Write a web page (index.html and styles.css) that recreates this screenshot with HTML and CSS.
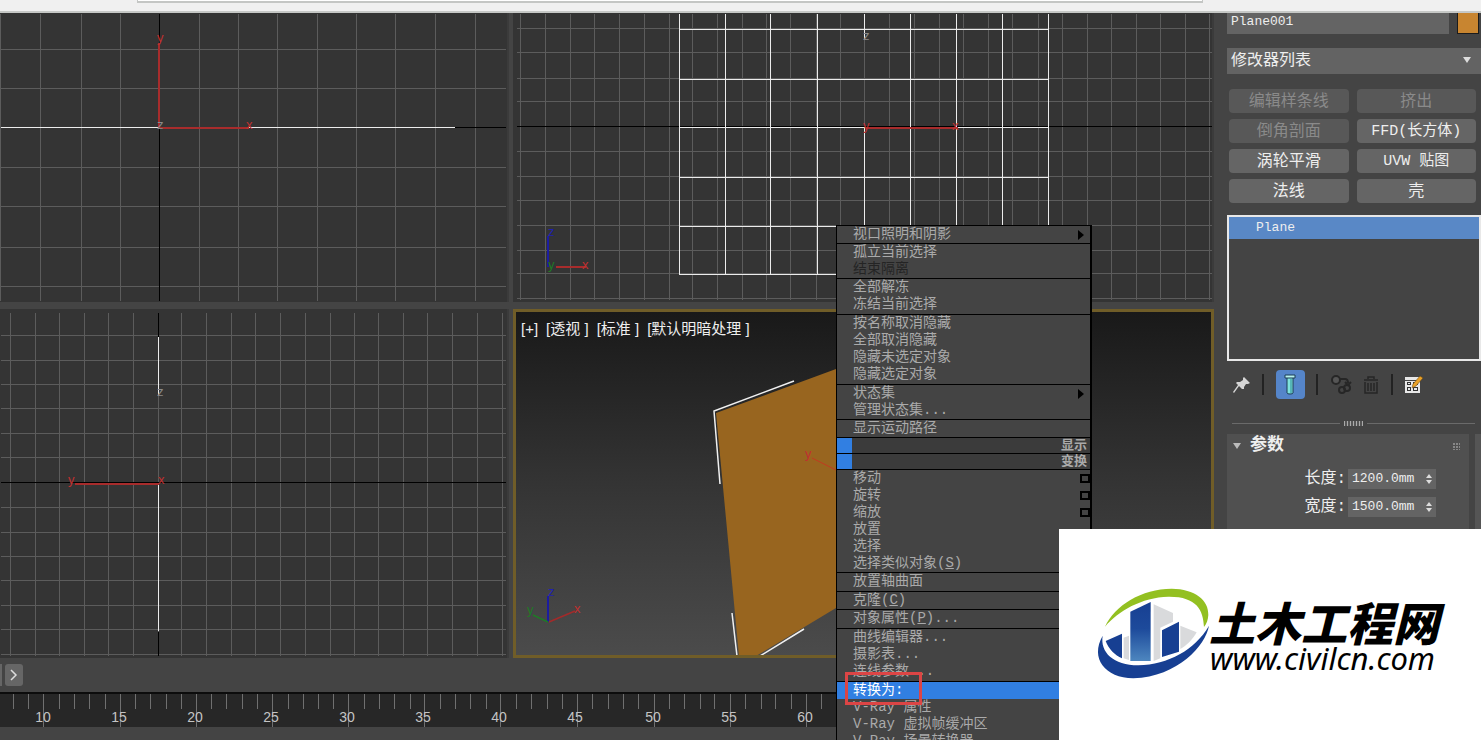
FILE: index.html
```html
<!DOCTYPE html>
<html lang="zh-CN">
<head>
    <meta charset="UTF-8">
    <meta name="viewport" content="width=device-width, initial-scale=1.0">
    <title>Plane001</title>
    <link rel="stylesheet" href="styles.css">
</head>
<body>

    <div class="topbar"><div class="topbar-field"></div></div>

    <div class="app">
        <main class="workspace">
            <div class="viewports">
                <!-- Top view -->
                <section class="viewport">
                    <svg viewBox="0 13 509 289" preserveAspectRatio="xMinYMin slice">
                        <g transform="translate(.5 .5)">
                            <path class="grid" d="M0 13V300M40 13V300M81 13V300M120 13V300M199 13V300M238 13V300M277 13V300M317 13V300M356 13V300M395 13V300M435 13V300M475 13V300M0 49H505M0 88H505M0 167H505M0 206H505M0 247H505M0 286H505"/>
                            <path class="origin" d="M159 13V300M454 127H505"/>
                            <path class="mesh" d="M0 127H158M246 127H454"/>
                            <path class="red" d="M158 42V127M158 127H248"/>
                        </g>
                        <text class="axis red-text" x="157" y="42">y</text>
                        <text class="axis red-text" x="246" y="129">x</text>
                        <text class="axis grey-text" x="157" y="129">z</text>
                    </svg>
                </section>

                <!-- Front view -->
                <section class="viewport">
                    <svg viewBox="513 13 701 289" preserveAspectRatio="xMinYMin slice">
                        <g transform="translate(.5 .5)">
                            <path class="grid" d="M520 13V299M545 13V299M570 13V299M594 13V299M619 13V299M644 13V299M669 13V299M692 13V299M717 13V299M742 13V299M766 13V299M790 13V299M816 13V299M840 13V299M864 13V299M889 13V299M914 13V299M939 13V299M963 13V299M988 13V299M1012 13V299M1038 13V299M1062 13V299M1087 13V299M1111 13V299M1136 13V299M1160 13V299M1185 13V299M1209 13V299M516 28H1211M516 52H1211M516 78H1211M516 101H1211M516 151H1211M516 176H1211M516 200H1211M516 225H1211M516 250H1211M516 273H1211M516 298H1211"/>
                            <path class="origin" d="M516 126H1211"/>
                            <path class="mesh" d="M679 13V274M725 13V274M770 13V274M817 13V274M864 13V38M864 127V274M910 13V274M956 13V274M1002 13V274M1048 13V274M679 29H1048M679 79H1048M679 127H864M956 127H1048M679 177H1048M679 226H1048M679 274H1048"/>
                            <path class="red" d="M865 127H957"/>
                            <path class="blue" d="M547 235V266"/>
                            <path class="red" d="M555 266H585"/>
                        </g>
                        <text class="axis grey-text" x="863" y="40">z</text>
                        <text class="axis red-text" x="863" y="130">y</text>
                        <text class="axis red-text" x="952" y="130">x</text>
                        <text class="axis blue-text" x="548" y="236">z</text>
                        <text class="axis green-text" x="548" y="269">y</text>
                        <text class="axis red-text" x="582" y="269">x</text>
                    </svg>
                </section>

                <!-- Left view -->
                <section class="viewport">
                    <svg viewBox="0 309 509 349" preserveAspectRatio="xMinYMin slice">
                        <g transform="translate(.5 .5)">
                            <path class="grid" d="M10 312V655M35 312V655M59 312V655M84 312V655M108 312V655M133 312V655M158 312V655M181 312V655M206 312V655M231 312V655M255 312V655M280 312V655M305 312V655M330 312V655M354 312V655M378 312V655M403 312V655M427 312V655M452 312V655M477 312V655M502 312V655M0 335H505M0 360H505M0 384H505M0 408H505M0 433H505M0 457H505M0 507H505M0 532H505M0 556H505M0 580H505M0 605H505M0 629H505M0 654H505"/>
                            <path class="origin" d="M158 312V336M158 631V655M0 482H505"/>
                            <path class="mesh" d="M158 336V394M158 484V630"/>
                            <path class="red" d="M74 483H158"/>
                        </g>
                        <text class="axis grey-text" x="157" y="396">z</text>
                        <text class="axis red-text" x="68" y="484">y</text>
                        <text class="axis red-text" x="158" y="484">x</text>
                    </svg>
                </section>

                <!-- Perspective view -->
                <section class="viewport active">
                    <svg viewBox="516 312 695 343" preserveAspectRatio="xMinYMin slice">
                        <path fill="#98651f" d="M716 413 836 369 880 353V582L836 608 756 656H739Z"/>
                        <path class="edge" d="M794 381 714 411 720 484M732 613 737 656M760 656 804 629"/>
                        <path class="axis-line" stroke="#c23a20" d="M812 458 838 471"/>
                        <path class="axis-line" stroke="#1c1ca0" stroke-width="2" d="M548 596V622"/>
                        <path class="axis-line" stroke="#1f7a26" stroke-width="1.5" d="M533 615 548 622"/>
                        <path class="axis-line" stroke="#a32a2a" stroke-width="1.5" d="M549 622 575 611"/>
                        <text class="axis red-text" x="805" y="458">y</text>
                        <text class="axis blue-text" x="548" y="596">z</text>
                        <text class="axis green-text" x="527" y="614">y</text>
                        <text class="axis red-text" x="574" y="613">x</text>
                    </svg>
                    <div class="viewport-label">
                        <span>[+]</span><span>[透视 ]</span><span>[标准 ]</span><span>[默认明暗处理 ]</span>
                    </div>
                </section>
            </div>

            <!-- Time slider and track bar -->
            <div class="slider-row">
                <span class="slider-end"></span>
                <button class="slider-next" aria-label="下一帧">
                    <svg width="8" height="12" viewBox="0 0 8 12"><path fill="none" stroke="#ddd" stroke-width="1.5" d="M1 1 6 6 1 11"/></svg>
                </button>
            </div>
            <div class="trackbar">
                <svg viewBox="0 692 1216 35" preserveAspectRatio="xMinYMin slice">
                    <path class="tick" transform="translate(.5 0)" d="M13 694V709M28 694V709M43 694V727M59 694V709M74 694V709M89 694V709M105 694V709M120 694V727M135 694V709M150 694V709M166 694V709M181 694V709M196 694V727M211 694V709M226 694V709M242 694V709M257 694V709M272 694V727M288 694V709M303 694V709M318 694V709M333 694V709M348 694V727M364 694V709M379 694V709M394 694V709M410 694V709M424 694V727M440 694V709M455 694V709M470 694V709M486 694V709M500 694V727M516 694V709M531 694V709M547 694V709M562 694V709M577 694V727M592 694V709M608 694V709M623 694V709M638 694V709M654 694V727M669 694V709M684 694V709M700 694V709M714 694V709M730 694V727M745 694V709M761 694V709M775 694V709M791 694V709M806 694V727M821 694V709"/>
                    <g class="tick-labels">
                        <text x="43" y="722">10</text>
                        <text x="119" y="722">15</text>
                        <text x="195" y="722">20</text>
                        <text x="271" y="722">25</text>
                        <text x="347" y="722">30</text>
                        <text x="423" y="722">35</text>
                        <text x="499" y="722">40</text>
                        <text x="575" y="722">45</text>
                        <text x="653" y="722">50</text>
                        <text x="729" y="722">55</text>
                        <text x="805" y="722">60</text>
                    </g>
                </svg>
            </div>
            <div class="statusbar"></div>
        </main>

        <!-- Modify panel -->
        <aside class="panel">
            <div class="name-row">
                <input class="name-input" type="text" value="Plane001" aria-label="名称">
                <button class="swatch" aria-label="颜色"></button>
            </div>

            <div class="modifier-select">
                <select aria-label="修改器列表">
                    <option>修改器列表</option>
                </select>
            </div>

            <div class="modifier-buttons">
                <button disabled>编辑样条线</button>
                <button disabled>挤出</button>
                <button disabled>倒角剖面</button>
                <button class="mixed">FFD(长方体)</button>
                <button>涡轮平滑</button>
                <button class="mixed">UVW 贴图</button>
                <button>法线</button>
                <button>壳</button>
            </div>

            <ul class="stack">
                <li class="selected">Plane</li>
            </ul>

            <div class="stack-tools">
                <button class="tool" aria-label="锁定堆栈">
                    <svg width="18" height="18" viewBox="0 0 18 18"><path fill="#d5d5d5" d="M11 1 17 7 15 8 13 8 11 11 11 13 9 13 6 10 1 17 0 16 5 9 3 7 4 6 7 6 10 4 10 2Z"/></svg>
                </button>
                <span class="tool-sep"></span>
                <button class="tool on" aria-label="显示最终结果">
                    <svg width="14" height="22" viewBox="0 0 14 22"><path fill="#7fe3dc" stroke="#1d3d55" d="M4 3H10V19Q10 20 7 20 4 20 4 19Z"/><path fill="#b8f2ee" stroke="#1d3d55" d="M2 1H12V4H2Z"/><path stroke="#2f8b93" d="M8 5V19"/></svg>
                </button>
                <span class="tool-sep"></span>
                <button class="tool" aria-label="使唯一">
                    <svg width="22" height="22" viewBox="0 0 22 22"><g fill="none" stroke="#262626" stroke-width="2"><circle cx="6" cy="6" r="4" fill="#555"/><circle cx="12" cy="16" r="3"/><circle cx="17" cy="14" r="3"/><path d="M10 5H15Q18 5 18 9M15 8 18 11 21 8"/></g></svg>
                </button>
                <button class="tool" aria-label="移除修改器">
                    <svg width="16" height="20" viewBox="0 0 16 20"><g fill="none" stroke="#262626" stroke-width="1.5"><path d="M1 5H15M5 4V2H11V4M2 7V18H14V7M5 8V16M8 8V16M11 8V16"/></g></svg>
                </button>
                <span class="tool-sep"></span>
                <button class="tool" aria-label="配置修改器集">
                    <svg width="20" height="20" viewBox="0 0 20 20"><path fill="#e8e8e8" d="M1 2H15V5H1ZM1 6H16V18H1Z"/><path fill="#333" d="M3 7H7V10H3ZM9 7H14V10H9ZM3 12H7V16H3ZM9 12H14V16H9Z"/><path fill="#e8e8e8" d="M4 8H6V9H4ZM4 13H6V15H4ZM10 13H13V15H10Z"/><path fill="#e9a127" stroke="#5a3f14" stroke-width=".5" d="M16 1 19 3 12 11 8 13 9 9Z"/></svg>
                </button>
            </div>

            <div class="divider"><span class="divider-grip"></span></div>

            <div class="rollouts">
                <section class="rollout">
                    <h2 class="rollout-head"><span class="caret"></span>参数<span class="dots"></span></h2>
                    <div class="param">
                        <label for="length">长度:</label>
                        <div class="spinner"><input id="length" type="text" value="1200.0mm"><span class="arrows"></span></div>
                    </div>
                    <div class="param">
                        <label for="width">宽度:</label>
                        <div class="spinner"><input id="width" type="text" value="1500.0mm"><span class="arrows"></span></div>
                    </div>
                </section>
                <div class="scrollbar"></div>
            </div>
        </aside>
    </div>

    <!-- Quad menu -->
    <nav class="menu">
        <div class="menu-group">
            <button class="submenu">视口照明和阴影</button>
        </div>
        <div class="menu-group">
            <button>孤立当前选择</button>
            <button disabled>结束隔离</button>
        </div>
        <div class="menu-group roomy">
            <button>全部解冻</button>
            <button>冻结当前选择</button>
        </div>
        <div class="menu-group roomy">
            <button>按名称取消隐藏</button>
            <button>全部取消隐藏</button>
            <button>隐藏未选定对象</button>
            <button>隐藏选定对象</button>
        </div>
        <div class="menu-group">
            <button class="submenu">状态集</button>
            <button>管理状态集...</button>
        </div>
        <div class="menu-group">
            <button>显示运动路径</button>
        </div>
        <h3 class="menu-title">显示</h3>
        <h3 class="menu-title">变换</h3>
        <div class="menu-group">
            <button class="boxed">移动</button>
            <button class="boxed">旋转</button>
            <button class="boxed">缩放</button>
            <button>放置</button>
            <button>选择</button>
            <button>选择类似对象(<u>S</u>)</button>
        </div>
        <div class="menu-group roomy">
            <button>放置轴曲面</button>
        </div>
        <div class="menu-group">
            <button>克隆(<u>C</u>)</button>
        </div>
        <div class="menu-group roomy">
            <button>对象属性(<u>P</u>)...</button>
        </div>
        <div class="menu-group roomy">
            <button>曲线编辑器...</button>
            <button>摄影表...</button>
            <button>连线参数...</button>
        </div>
        <div class="menu-group">
            <button class="current">转换为:</button>
            <button>V-Ray 属性</button>
            <button>V-Ray 虚拟帧缓冲区</button>
            <button>V-Ray 场景转换器</button>
        </div>
        <div class="marker"></div>
    </nav>

    <!-- Site logo -->
    <div class="logo">
        <svg viewBox="0 0 422 211">
            <defs>
                <linearGradient id="tower" x1="0" y1="0" x2="0" y2="1">
                    <stop offset="0" stop-color="#173f92"/>
                    <stop offset=".45" stop-color="#1d4a9b"/>
                    <stop offset="1" stop-color="#4d86bf"/>
                </linearGradient>
            </defs>
            <g transform="translate(-4 -4) scale(.3333)">
                <path fill="#93c021" d="M150 305C180 240 260 192 350 191 420 192 462 225 460 270 459 285 455 297 447 306 445 255 425 214 340 215 260 217 190 258 150 305Z"/>
                <path fill="#d9dadc" d="M296 238 354 264V290L316 308V400L296 408ZM376 302 425 322C415 342 392 365 376 372ZM206 338 222 332V405L206 400Z"/>
                <path fill="#173f92" d="M152 348 201 326V400C180 392 160 370 152 348ZM321 316 372 290V380L321 396Z"/>
                <path fill="url(#tower)" d="M226 260 287 231V408H226Z"/>
                <path fill="#173f92" d="M462 302C452 360 370 455 235 460 150 458 104 400 143 332 135 382 175 420 250 421 340 418 420 375 462 302Z"/>
            </g>
            <text class="logo-name" x="150" y="112">土木工程网</text>
            <text class="logo-url" x="151" y="141">www.civilcn.com</text>
        </svg>
    </div>

</body>
</html>
```

FILE: styles.css
```css
* {
    box-sizing: border-box;
}
body {
    margin: 0;
    height: 100vh;
    overflow: hidden;
    position: relative;
    display: flex;
    flex-direction: column;
    background-color: #444;
    color: #eee;
    font-family: "Liberation Mono", "Noto Sans CJK SC", monospace;
    font-size: 13px;
}
button, input, select {
    font: inherit;
    color: inherit;
    border: none;
    padding: 0;
    margin: 0;
    background: none;
}
svg {
    display: block;
}

/* Strip above the program window */
.topbar {
    height: 13px;
    flex: none;
    padding: 0 278px 0 137px;
    background-color: #f0f0f0;
    border-bottom: 2px solid #c6c8c6;
}
.topbar-field {
    height: 3px;
    background-color: #fff;
    border: 1px solid #c4c6c4;
    border-width: 0 1px 2px;
}

.app {
    flex: 1;
    min-height: 0;
    display: flex;
}
.workspace {
    flex: 1;
    min-width: 0;
    display: flex;
    flex-direction: column;
}

/* Viewports */
.viewports {
    flex: 1;
    min-height: 0;
    display: grid;
    grid-template-columns: 509fr 701fr;
    grid-template-rows: 289fr 349fr;
    gap: 7px 4px;
    padding-right: 2px;
}
.viewport {
    position: relative;
    min-width: 0;
    min-height: 0;
    overflow: hidden;
    background-color: #343434;
    border-right: 2px solid #3b3b3b;
}
.viewport svg {
    width: 100%;
    height: 100%;
}
.viewport:not(.active) svg {
    width: calc(100% + 2px);
}
.viewport.active {
    border: 3px solid #705d28;
    background: linear-gradient(#191919, #343434 50%, #4b4b4b);
}
.viewport-label {
    position: absolute;
    top: 7px;
    left: 5px;
    display: flex;
    gap: 8px;
    font-family: "Liberation Sans", "Noto Sans CJK SC", sans-serif;
    font-size: 15px;
    line-height: 20px;
}
.grid, .origin, .mesh, .red, .blue, .tick {
    fill: none;
    shape-rendering: crispEdges;
}
.grid { stroke: #5c5c5c; }
.origin { stroke: #000; }
.mesh { stroke: #ececec; }
.red { stroke: #a82c2c; stroke-width: 2; }
.blue { stroke: #1c1ca0; stroke-width: 2; }
.edge { fill: none; stroke: #f0f0f0; stroke-width: 1.5; }
.axis-line { fill: none; }
.axis {
    font-family: "Liberation Sans", sans-serif;
    font-size: 13px;
}
.red-text { fill: #c03030; }
.grey-text { fill: #8a8a8a; }
.blue-text { fill: #2222b0; }
.green-text { fill: #1f7a26; }

/* Time controls */
.slider-row {
    height: 34px;
    flex: none;
    display: flex;
    align-items: center;
    gap: 3px;
}
.slider-end {
    width: 2px;
    height: 22px;
    background-color: #666;
}
.slider-next {
    width: 18px;
    height: 22px;
    display: flex;
    align-items: center;
    justify-content: center;
    border-radius: 3px;
    background-color: #666;
}
.trackbar {
    height: 35px;
    flex: none;
    overflow: hidden;
    background-color: #272727;
    border-top: 2px solid #0c0c0c;
}
.trackbar svg {
    width: 100%;
    height: 35px;
    margin-top: -2px;
}
.tick { stroke: #707070; }
.tick-labels {
    fill: #c4c4c4;
    font-family: "Liberation Sans", sans-serif;
    font-size: 14px;
    text-anchor: middle;
}
.statusbar {
    height: 13px;
    flex: none;
}

/* Modify panel */
.panel {
    width: 265px;
    flex: none;
    display: flex;
    flex-direction: column;
    padding-left: 11px;
}
.name-row {
    height: 21px;
    flex: none;
    display: flex;
    gap: 8px;
    padding-right: 2px;
}
.name-input {
    flex: 1;
    min-width: 0;
    padding: 0 4px 4px;
    background-color: #646464;
}
.swatch {
    width: 22px;
    background-color: #c88530;
    border: 1px solid #1c1c1c;
    border-top: none;
}
.modifier-select {
    position: relative;
    margin-top: 14px;
}
.modifier-select select {
    width: 100%;
    height: 26px;
    padding-left: 4px;
    appearance: none;
    background-color: #636363;
    font-size: 16px;
    display: block;
}
.modifier-select::after {
    content: "";
    position: absolute;
    right: 10px;
    top: 9px;
    border: 4px solid transparent;
    border-top: 6px solid #ddd;
    border-bottom: none;
}
.modifier-buttons {
    display: grid;
    grid-template-columns: 1fr 1fr;
    gap: 6px 8px;
    margin: 15px 5px 0 2px;
}
.modifier-buttons button {
    height: 24px;
    padding-top: 2px;
    border-radius: 4px;
    background-color: #656565;
    font-size: 16px;
    line-height: 22px;
    white-space: nowrap;
}
.modifier-buttons .mixed {
    font-size: 15px;
}
.modifier-buttons button:disabled {
    background-color: #585858;
    color: #8a8a8a;
}
.stack {
    list-style: none;
    height: 146px;
    flex: none;
    margin: 12px 0 0;
    padding: 0;
    border: 2px solid #e8e8e8;
}
.stack .selected {
    height: 22px;
    padding-left: 27px;
    line-height: 22px;
    background-color: #5988c6;
}
.stack-tools {
    display: flex;
    align-items: center;
    justify-content: space-between;
    height: 29px;
    margin: 9px 57px 0 6px;
}
.tool {
    display: flex;
    align-items: center;
    justify-content: center;
}
.tool.on {
    width: 29px;
    height: 29px;
    border-radius: 4px;
    background-color: #5585c9;
}
.tool-sep {
    width: 2px;
    height: 21px;
    background-color: #222;
}
.divider {
    display: flex;
    align-items: center;
    gap: 4px;
    height: 6px;
    margin: 21px 6px 0 5px;
}
.divider::before, .divider::after {
    content: "";
    flex: 1;
    height: 1px;
    background-color: #6a6a6a;
}
.divider-grip {
    width: 19px;
    height: 5px;
    background: repeating-linear-gradient(90deg, #aaa 0 1px, #555 1px 3px);
}
.rollouts {
    flex: 1;
    display: flex;
    gap: 6px;
    margin-top: 8px;
}
.rollout {
    flex: 1;
    background-color: #505050;
}
.scrollbar {
    width: 6px;
    background-color: #555;
}
.rollout-head {
    display: flex;
    align-items: center;
    height: 24px;
    margin: 0 0 11px;
    padding: 0 9px 0 6px;
    font-size: 17px;
    line-height: 24px;
}
.caret {
    margin-right: 9px;
    border: 4px solid transparent;
    border-top: 6px solid #bbb;
    border-bottom: none;
}
.dots {
    width: 8px;
    height: 8px;
    margin-left: auto;
    background-image: repeating-linear-gradient(#505050 0 1px, transparent 1px 3px), repeating-linear-gradient(90deg, #505050 0 1px, #888 1px 3px);
}
.param {
    display: flex;
    align-items: center;
    justify-content: flex-end;
    gap: 2px;
    height: 20px;
    margin: 0 33px 8px 0;
    font-size: 16px;
    line-height: 20px;
}
.spinner {
    display: flex;
    align-items: center;
    width: 88px;
    height: 20px;
    padding: 0 4px;
    background-color: #646464;
    font-size: 13px;
}
.spinner input {
    flex: 1;
    min-width: 0;
}
.arrows::before, .arrows::after {
    content: "";
    display: block;
    border: 3px solid transparent;
}
.arrows::before {
    border-top: none;
    border-bottom: 4px solid #ddd;
}
.arrows::after {
    margin-top: 2px;
    border-bottom: none;
    border-top: 4px solid #ddd;
}

/* Quad menu */
.menu {
    position: absolute;
    top: 225px;
    left: 836px;
    width: 256px;
    border: 1px solid #000;
    border-width: 0 2px 0 1px;
    background-color: #444;
    font-size: 14px;
    color: #aaa;
}
.menu-group {
    border-top: 1px solid #000;
}
.menu-group.roomy {
    padding-bottom: 1px;
}
.menu-group button {
    display: flex;
    align-items: center;
    width: 100%;
    height: 17px;
    padding-left: 16px;
    line-height: 17px;
    white-space: pre;
    text-align: left;
}
.menu-group button:disabled {
    color: #242424;
}
.menu-group .current {
    background-color: #317fe2;
    color: #fff;
}
.submenu::after {
    content: "";
    margin: 0 6px 0 auto;
    border: 5px solid transparent;
    border-left: 6px solid #000;
    border-right: none;
}
.boxed::after {
    content: "";
    width: 6px;
    height: 5px;
    margin-left: auto;
    border: 2px solid #000;
}
.menu-title {
    height: 16px;
    margin: 0;
    padding-right: 3px;
    border-top: 1px solid #000;
    background: linear-gradient(#317fe2, #317fe2) no-repeat 0 0 / 15px 100%;
    background-color: #3b3b3b;
    font-size: 13px;
    line-height: 15px;
    text-align: right;
}
.marker {
    position: absolute;
    top: 447px;
    left: 8px;
    width: 77px;
    height: 33px;
    border: 3px solid #dc4545;
}

/* Site logo */
.logo {
    position: absolute;
    right: 0;
    bottom: 0;
    width: 422px;
    background-color: #fff;
}
.logo-name {
    font-family: "Noto Sans CJK SC", sans-serif;
    font-size: 46px;
    font-weight: 900;
    font-style: italic;
}
.logo-url {
    font-family: "Noto Sans", sans-serif;
    font-size: 31px;
    font-style: italic;
}
```
